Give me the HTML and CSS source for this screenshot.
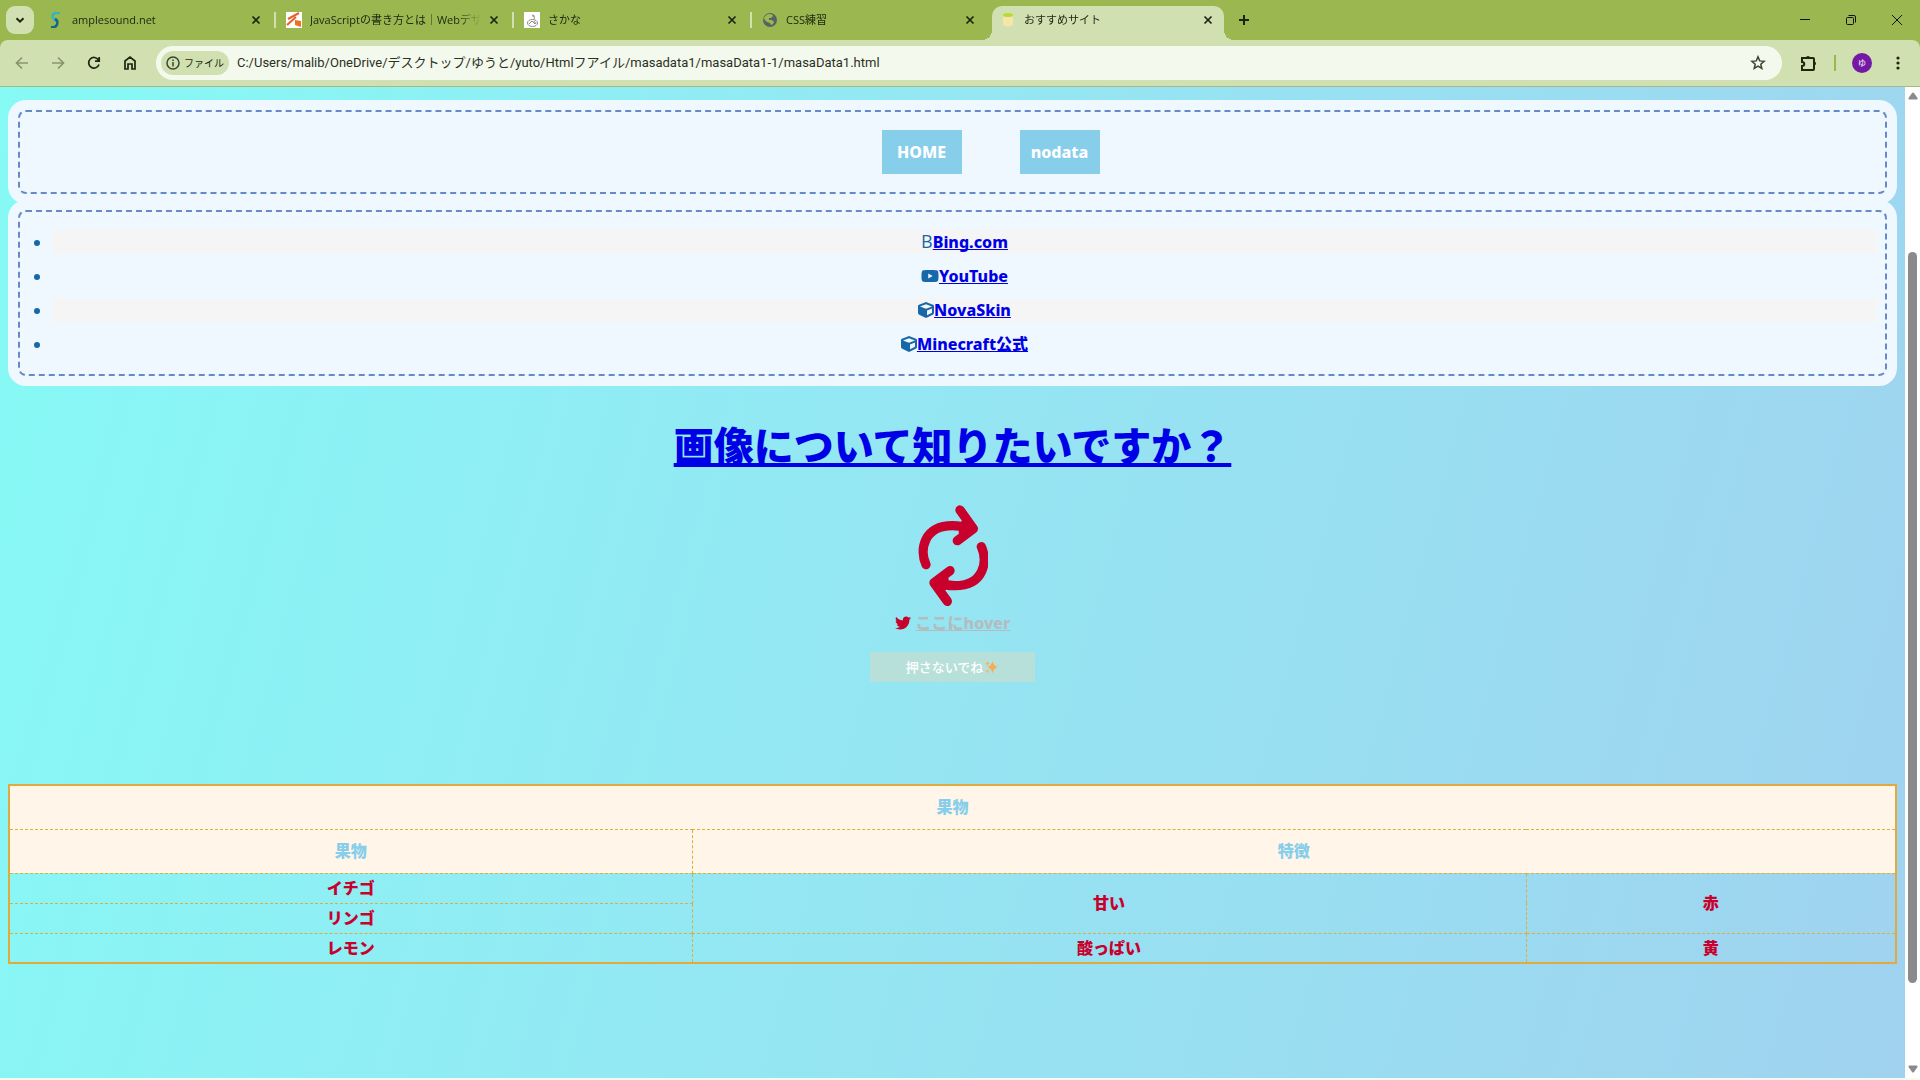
FILE: index.html
```html
<!DOCTYPE html>
<html lang="ja">
<head>
<meta charset="utf-8">
<meta name="viewport" content="width=device-width, initial-scale=1">
<title>おすすめサイト</title>
<link rel="stylesheet" href="styles.css">
</head>
<body>
<header class="browser">
  <div class="tabstrip">
    <button class="tab-search" aria-label="タブを検索"><svg width="10" height="10" viewBox="0 0 10 10"><path class="line" d="M1.500 3.200 5 6.700l3.500-3.500"/></svg></button>
    <div class="tabs">
      <div class="tab">
        <svg class="favicon" viewBox="0 0 16 16"><path d="M12 1C5 0 4 3 5 6c1 2 3 2 3 4" fill="none" stroke="#2fb5c4" stroke-width="2.500"/><path d="M7 7c3 1 3 5 1 7-1 1-3 1.500-5 1" fill="none" stroke="#12688a" stroke-width="2.500"/></svg>
        <span class="tab-title">amplesound.net</span>
        <button class="tab-close" aria-label="閉じる"><svg width="10" height="10" viewBox="0 0 10 10"><path class="line" d="m1.500 1.500 7 7m0-7-7 7"/></svg></button>
      </div>
      <div class="tab">
        <svg class="favicon" viewBox="0 0 16 16"><path fill="#fff" d="M0 0h16v16H0z"/><path d="m2 7 11-6M1 13l9-8" stroke="#e8602c" stroke-width="2" fill="none"/><path fill="#f07020" d="m9 8 6 1v6l-6-2z"/></svg>
        <span class="tab-title">JavaScriptの書き方とは｜Webデザ</span>
        <button class="tab-close" aria-label="閉じる"><svg width="10" height="10" viewBox="0 0 10 10"><path class="line" d="m1.500 1.500 7 7m0-7-7 7"/></svg></button>
      </div>
      <div class="tab">
        <svg class="favicon" viewBox="0 0 16 16"><path fill="#fff" d="M0 0h16v16H0z"/><g fill="none" stroke="#888"><ellipse cx="8.500" cy="11" rx="5" ry="3.500"/><path d="M8 3c2 0 3 2 2 4M5 12l3-3 3 3M10 9l2 3M9 5l1-2"/></g></svg>
        <span class="tab-title">さかな</span>
        <button class="tab-close" aria-label="閉じる"><svg width="10" height="10" viewBox="0 0 10 10"><path class="line" d="m1.500 1.500 7 7m0-7-7 7"/></svg></button>
      </div>
      <div class="tab tab-before-active">
        <svg class="favicon" viewBox="0 0 16 16"><circle cx="8" cy="8" r="7" fill="#566266"/><path fill="#9ab84f" d="M8 2c2 0 3 1 3 2L9 6H7v2h3l2 2-1 2-2 1-1-2-3-1-3-3c0-3 3-5 6-5z"/></svg>
        <span class="tab-title">CSS練習</span>
        <button class="tab-close" aria-label="閉じる"><svg width="10" height="10" viewBox="0 0 10 10"><path class="line" d="m1.500 1.500 7 7m0-7-7 7"/></svg></button>
      </div>
      <div class="tab tab-active">
        <svg class="favicon" viewBox="0 0 16 16"><path fill="#f5e5a8" d="M3 3h10v10c-2 2-8 2-10 0z"/><ellipse cx="8" cy="3" rx="5" ry="2" fill="#b9dc35"/></svg>
        <span class="tab-title">おすすめサイト</span>
        <button class="tab-close" aria-label="閉じる"><svg width="10" height="10" viewBox="0 0 10 10"><path class="line" d="m1.500 1.500 7 7m0-7-7 7"/></svg></button>
      </div>
    </div>
    <button class="new-tab" aria-label="新しいタブ"><svg width="12" height="12" viewBox="0 0 12 12"><path class="line" d="M6 1v10M1 6h10"/></svg></button>
    <div class="window-controls">
      <button aria-label="最小化"><svg width="12" height="12" viewBox="0 0 12 12"><path class="hair" d="M1 5.500h10"/></svg></button>
      <button aria-label="元に戻す"><svg width="12" height="12" viewBox="0 0 12 12"><rect class="hair" x="1.500" y="3.500" width="7" height="7" rx="1"/><path class="hair" d="M3.500 1.500H9a1.500 1.500 0 0 1 1.500 1.500v5.500"/></svg></button>
      <button aria-label="閉じる"><svg width="12" height="12" viewBox="0 0 12 12"><path class="hair" d="m1 1 10 10M11 1 1 11"/></svg></button>
    </div>
  </div>
  <div class="toolbar">
    <div class="nav-buttons">
      <button class="dim" aria-label="戻る"><svg width="14" height="14" viewBox="0 0 14 14"><path class="line" d="M13 7H2m5-5.500L1.500 7 7 12.500"/></svg></button>
      <button class="dim" aria-label="進む"><svg width="14" height="14" viewBox="0 0 14 14"><path class="line" d="M1 7h11M7 1.500 12.500 7 7 12.500"/></svg></button>
      <button aria-label="再読み込み"><svg width="14" height="14" viewBox="0 0 14 14"><path class="line" d="M12 8.500A5.300 5.300 0 1 1 11.500 4M12.200 1v4.200H8"/></svg></button>
      <button aria-label="ホーム"><svg width="14" height="16" viewBox="0 0 14 16"><path class="line" d="M2 6 7 2l5 4v8H9V9H5v5H2z"/></svg></button>
    </div>
    <div class="omnibox">
      <button class="chip"><svg width="14" height="14" viewBox="0 0 14 14"><circle class="info" cx="7" cy="7" r="6"/><path class="info" d="M7 6v4.500M7 3.500V5"/></svg>ファイル</button>
      <input class="url" type="text" aria-label="アドレス" value="C:/Users/malib/OneDrive/デスクトップ/ゆうと/yuto/Htmlフアイル/masadata1/masaData1-1/masaData1.html">
      <button class="star" aria-label="ブックマーク"><svg width="16" height="16" viewBox="0 0 16 16"><path class="info" d="m8 1.800 1.700 4.100 4.400.4-3.300 2.900 1 4.300L8 11.200l-3.800 2.300 1-4.300-3.300-2.900 4.400-.4z"/></svg></button>
    </div>
    <div class="tools">
      <button aria-label="拡張機能"><svg width="18" height="18" viewBox="0 0 18 18"><path class="line" d="M2 4h11q1 0 1 1v10q0 1-1 1H2v-4c3 0 3-4 0-4z"/><path d="M6 4a2 2 0 0 1 4 0zM14 7.500a2 2 0 0 1 0 4z" fill="#1c2412"/></svg></button>
      <span class="divider"></span>
      <button class="avatar" aria-label="プロフィール">ゆ</button>
      <button class="menu" aria-label="メニュー"><svg width="4" height="16" viewBox="0 0 4 16"><g fill="#1c2412"><circle cx="2" cy="3" r="1.600"/><circle cx="2" cy="8" r="1.600"/><circle cx="2" cy="13" r="1.600"/></g></svg></button>
    </div>
  </div>
</header>
<div class="viewport">
  <main class="page">
    <nav class="panel menu-panel">
      <a class="menu-link" href="#">HOME</a>
      <a class="menu-link" href="#">nodata</a>
    </nav>
    <ul class="panel links">
      <li><span class="letter">B</span><a href="#">Bing.com</a></li>
      <li><svg class="fa fa-wide" viewBox="0 0 576 512"><path d="M549.655 124.083c-6.281-23.650-24.787-42.276-48.284-48.597C458.781 64 288 64 288 64S117.220 64 74.629 75.486c-23.497 6.322-42.003 24.947-48.284 48.597-11.412 42.867-11.412 132.305-11.412 132.305s0 89.438 11.412 132.305c6.281 23.650 24.787 41.500 48.284 47.821C117.220 448 288 448 288 448s170.780 0 213.371-11.486c23.497-6.321 42.003-24.171 48.284-47.821 11.412-42.867 11.412-132.305 11.412-132.305s0-89.438-11.412-132.305zm-317.510 213.508V175.185l142.739 81.205-142.739 81.201z"/></svg><a href="#">YouTube</a></li>
      <li><svg class="fa" viewBox="0 0 512 512"><path d="M239.100 6.300l-208 78c-18.700 7-31.100 25-31.100 45v225.100c0 18.200 10.300 34.800 26.500 42.900l208 104c13.500 6.800 29.400 6.800 42.900 0l208-104c16.300-8.100 26.500-24.800 26.500-42.900V129.300c0-20-12.400-37.900-31.100-44.900l-208-78C262 2.200 250 2.200 239.100 6.300zM256 68.400l192 72v1.100l-192 78-192-78v-1.100l192-72zm32 356V275.500l160-65v133.900l-160 80z"/></svg><a href="#">NovaSkin</a></li>
      <li><svg class="fa" viewBox="0 0 512 512"><path d="M239.100 6.300l-208 78c-18.700 7-31.100 25-31.100 45v225.100c0 18.200 10.300 34.800 26.500 42.900l208 104c13.500 6.800 29.400 6.800 42.900 0l208-104c16.300-8.100 26.500-24.800 26.500-42.900V129.300c0-20-12.400-37.900-31.100-44.900l-208-78C262 2.200 250 2.200 239.100 6.300zM256 68.400l192 72v1.100l-192 78-192-78v-1.100l192-72zm32 356V275.500l160-65v133.900l-160 80z"/></svg><a href="#">Minecraft公式</a></li>
    </ul>
    <h1 class="question"><a href="#">画像について知りたいですか？</a></h1>
    <svg class="sync" viewBox="0 0 210 312" aria-hidden="true"><g id="arrow"><path d="M24 182C4 138 16 65 104 65c20 0 38 4 54 10"/><path d="m126 18 40 56-48 36M140 62l10 14-14 8"/></g><use href="#arrow" transform="rotate(180 107 155)"/></svg>
    <p class="hover-line"><svg class="fa" viewBox="0 0 512 512"><path d="M459.370 151.716c.325 4.548.325 9.097.325 13.645 0 138.720-105.583 298.558-298.558 298.558-59.452 0-114.680-17.219-161.137-47.106 8.447.974 16.568 1.299 25.340 1.299 49.055 0 94.213-16.568 130.274-44.832-46.132-.975-84.792-31.188-98.112-72.772 6.498.974 12.995 1.624 19.818 1.624 9.421 0 18.843-1.300 27.614-3.573-48.081-9.747-84.143-51.980-84.143-102.985v-1.299c13.969 7.797 30.214 12.670 47.431 13.319-28.264-18.843-46.781-51.005-46.781-87.391 0-19.492 5.197-37.360 14.294-52.954 51.655 63.675 129.300 105.258 216.365 109.807-1.624-7.797-2.599-15.918-2.599-24.040 0-57.828 46.782-104.934 104.934-104.934 30.213 0 57.502 12.670 76.670 33.137 23.715-4.548 46.456-13.320 66.599-25.340-7.798 24.366-24.366 44.833-46.132 57.827 21.117-2.273 41.584-8.122 60.426-16.243-14.292 20.791-32.161 39.308-52.628 54.253z"/></svg><a class="hover-link" href="#">ここにhover</a></p>
    <button class="press">押さないでね<svg class="sparkle" viewBox="0 0 14 14" role="img" aria-label="キラキラ"><path fill="#f6ab55" d="M8 1q.8 5 5.500 6Q8.800 8 8 13.500 7.200 8 2.500 7 7.200 6 8 1z"/><path fill="#f6b667" d="M3 1q.4 2 2.300 2.400Q3.400 4 3 6 2.600 4 .7 3.400 2.600 3 3 1zM3 9q.3 1.800 2 2.200-1.700.5-2 2.300-.3-1.800-2-2.300Q2.700 10.800 3 9z"/></svg></button>
    <table class="fruits">
      <colgroup><col class="col-name"><col class="col-taste"><col class="col-color"></colgroup>
      <thead>
        <tr><th colspan="3">果物</th></tr>
        <tr><th>果物</th><th colspan="2">特徴</th></tr>
      </thead>
      <tbody>
        <tr><td>イチゴ</td><td rowspan="2">甘い</td><td rowspan="2">赤</td></tr>
        <tr><td>リンゴ</td></tr>
        <tr><td>レモン</td><td>酸っぱい</td><td>黄</td></tr>
      </tbody>
    </table>
  </main>
  <div class="scrollbar" aria-hidden="true">
    <svg width="10" height="8" viewBox="0 0 10 8"><path fill="#8a8a8a" d="M4 1q1-1 2 0l3.500 5q.5 1.500-1 1.500h-7Q0 7.500.5 6z"/></svg>
    <div class="track"><span class="space-above"></span><span class="thumb"></span><span class="space-below"></span></div>
    <svg width="10" height="8" viewBox="0 0 10 8"><path fill="#8a8a8a" d="M4 7q1 1 2 0l3.500-5Q10 .5 8.500.5h-7Q0 .5.5 2z"/></svg>
  </div>
</div>
</body>
</html>
```
FILE: styles.css
```css
* { box-sizing: border-box; }

body {
  margin: 0;
  min-height: 100vh;
  display: flex;
  flex-direction: column;
  font-family: "Noto Sans", "Noto Sans CJK JP", sans-serif;
  font-size: 16px;
  line-height: 24px;
}

button {
  border: 0;
  margin: 0;
  padding: 0;
  background: none;
  color: inherit;
  font: inherit;
}

svg { display: block; flex: none; }

/* browser frame */
.browser {
  background: #9ab84f;
  color: #1c2412;
  font-family: "Open Sans", "Noto Sans CJK JP", sans-serif;
}
.line { fill: none; stroke: #1c2412; stroke-width: 2; }
.nav-buttons .line, .tab-close .line { stroke-width: 1.7; }
.hair { fill: none; stroke: #111; stroke-width: 1; }
.info { fill: none; stroke: #3c4434; stroke-width: 1.5; }

.tabstrip { display: flex; height: 40px; }
.tab-search {
  width: 28px;
  height: 28px;
  margin: 6px;
  border-radius: 9px;
  background: #d1e0b0;
  display: grid;
  place-items: center;
}
.tabs { display: flex; flex: 0 1 1184px; min-width: 0; }
.tab {
  flex: 0 1 238px;
  min-width: 0;
  display: flex;
  align-items: center;
  gap: 8px;
  padding: 0 2px 0 8px;
  margin: 6px 0;
  font-size: 11px;
  line-height: 28px;
  background: linear-gradient(#d1e0b0, #d1e0b0) right center / 2px 16px no-repeat content-box;
}
.tab-before-active { background: none; }
.tab-active {
  flex-basis: 232px;
  margin: 6px 0 0;
  padding: 0 11px 6px 8px;
  background: #d1e0b0;
  border-radius: 10px 10px 0 0;
  position: relative;
}
.tab-active::before,
.tab-active::after {
  content: "";
  position: absolute;
  bottom: 0;
  width: 10px;
  height: 10px;
}
.tab-active::before { left: -10px; background: radial-gradient(circle at 0 0, transparent 10px, #d1e0b0 10px); }
.tab-active::after { right: -10px; background: radial-gradient(circle at 100% 0, transparent 10px, #d1e0b0 10px); }
.favicon { width: 16px; height: 16px; }
.tab-title {
  flex: 1;
  overflow: hidden;
  white-space: nowrap;
  mask-image: linear-gradient(90deg, #000 calc(100% - 24px), transparent);
}
.tab-close { width: 10px; height: 28px; display: grid; place-items: center; margin-right: 15px; }
.tab-active .tab-close { margin-right: 0; }
.new-tab { width: 28px; height: 28px; margin: 6px; display: grid; place-items: center; }
.window-controls { display: flex; margin-left: auto; }
.window-controls button { width: 46px; display: grid; place-items: center; }

.toolbar {
  display: flex;
  align-items: center;
  height: 47px;
  background: #d1e0b0;
  border-bottom: 1px solid #a5b886;
  border-radius: 8px 8px 0 0;
}
.nav-buttons { display: flex; padding: 0 8px 0 4px; }
.nav-buttons button { width: 36px; height: 34px; display: grid; place-items: center; }
.nav-buttons .dim { opacity: 0.4; }
.omnibox {
  flex: 1;
  display: flex;
  align-items: center;
  height: 34px;
  padding: 0 16px 0 5px;
  border-radius: 17px;
  background: #f4f9ee;
}
.chip {
  display: flex;
  align-items: center;
  justify-content: center;
  gap: 4px;
  width: 68px;
  height: 24px;
  border-radius: 12px;
  background: #d1e0b0;
  font-size: 10px;
  line-height: 24px;
  white-space: nowrap;
}
.url {
  flex: 1;
  min-width: 0;
  height: 24px;
  margin-left: 8px;
  padding: 0;
  border: 0;
  outline: 0;
  background: none;
  color: #2a3022;
  font: 13px/24px Roboto, "Noto Sans CJK JP", sans-serif;
}
.tools { display: flex; align-items: center; padding: 0 20px 0 18px; }
.divider { width: 2px; height: 16px; margin: 0 16px; background: #9ab84f; }
.avatar {
  width: 20px;
  height: 20px;
  border-radius: 50%;
  background: #7419a5;
  color: #fff;
  font-size: 8px;
  line-height: 20px;
}
.menu { margin-left: 24px; }

/* page */
.viewport { flex: 1; display: flex; border-bottom: 2px solid #f4faf2; }
.page {
  flex: 1;
  min-width: 0;
  display: flex;
  flex-direction: column;
  align-items: center;
  padding: 23px 8px 0;
  background: linear-gradient(105deg, #86faf5, #93e8f3 42%, #9adcf1 75%, #a0d2ef);
  color: #c8002c;
  font-weight: 800;
}
.page a { color: #0000e6; text-decoration-skip-ink: none; }

.panel {
  align-self: stretch;
  margin: 0 10px 16px;
  border: 2px dashed #668ac8;
  border-radius: 8px;
  background: #f0f8ff;
  box-shadow: 0 0 0 10px #f0f8ff;
}
.menu-panel {
  display: flex;
  justify-content: center;
  gap: 58px;
  padding: 18px 0 18px 76px;
}
.page .menu-link {
  width: 80px;
  background: skyblue;
  color: #fff;
  line-height: 44px;
  text-align: center;
  text-decoration: none;
}
.links {
  display: flex;
  flex-direction: column;
  gap: 10px;
  padding: 18px 8px 18px 32px;
  margin-bottom: 40px;
  list-style: disc;
  color: #1668a8;
  text-align: center;
}
.links li:nth-child(odd) { background: #f5f5f5; }
.fa { display: inline-block; width: 16px; height: 16px; fill: currentColor; vertical-align: -2px; }
.fa-wide { width: 18px; }
.letter { font-family: "Open Sans", sans-serif; font-weight: 400; font-size: 18px; line-height: 20px; }

.question { margin: 0; font-size: 40px; line-height: 60px; font-weight: 900; }
.question a { text-decoration-thickness: 4px; }
.sync {
  width: 70px;
  height: 104px;
  margin-top: 28px;
  fill: none;
  stroke: #c8002c;
  stroke-width: 28;
  stroke-linecap: round;
  stroke-linejoin: round;
}
.hover-line { display: flex; align-items: center; gap: 5px; margin: 3px 0 17px; }
.page .hover-link { color: #b3bcbf; }
.press {
  display: flex;
  align-items: center;
  justify-content: center;
  width: 165px;
  height: 30px;
  background: #b8e0da;
  color: #fff;
  font-size: 13px;
  font-weight: 500;
}
.sparkle { width: 15px; height: 14px; margin-left: 1px; }

.fruits {
  width: 100%;
  margin: 102px 0 112px;
  table-layout: fixed;
  border-collapse: collapse;
  border: 2px solid #e0aa3c;
  text-align: center;
}
.col-name { width: 36.2%; }
.col-taste { width: 44.2%; }
.col-color { width: 19.6%; }
.fruits th, .fruits td { padding: 0; border: 1px dashed #dcae3c; }
.fruits th { height: 44px; background: #fff5e8; color: skyblue; font-weight: 900; }
.fruits td { height: 30px; }

.scrollbar {
  width: 15px;
  display: flex;
  flex-direction: column;
  align-items: center;
  padding: 5px 0;
  gap: 4px;
  background: #fff;
}
.track { flex: 1; width: 9px; display: flex; flex-direction: column; }
.space-above { flex: 148; }
.thumb { flex: 731; border-radius: 5px; background: #8a8a8a; }
.space-below { flex: 78; }
```
